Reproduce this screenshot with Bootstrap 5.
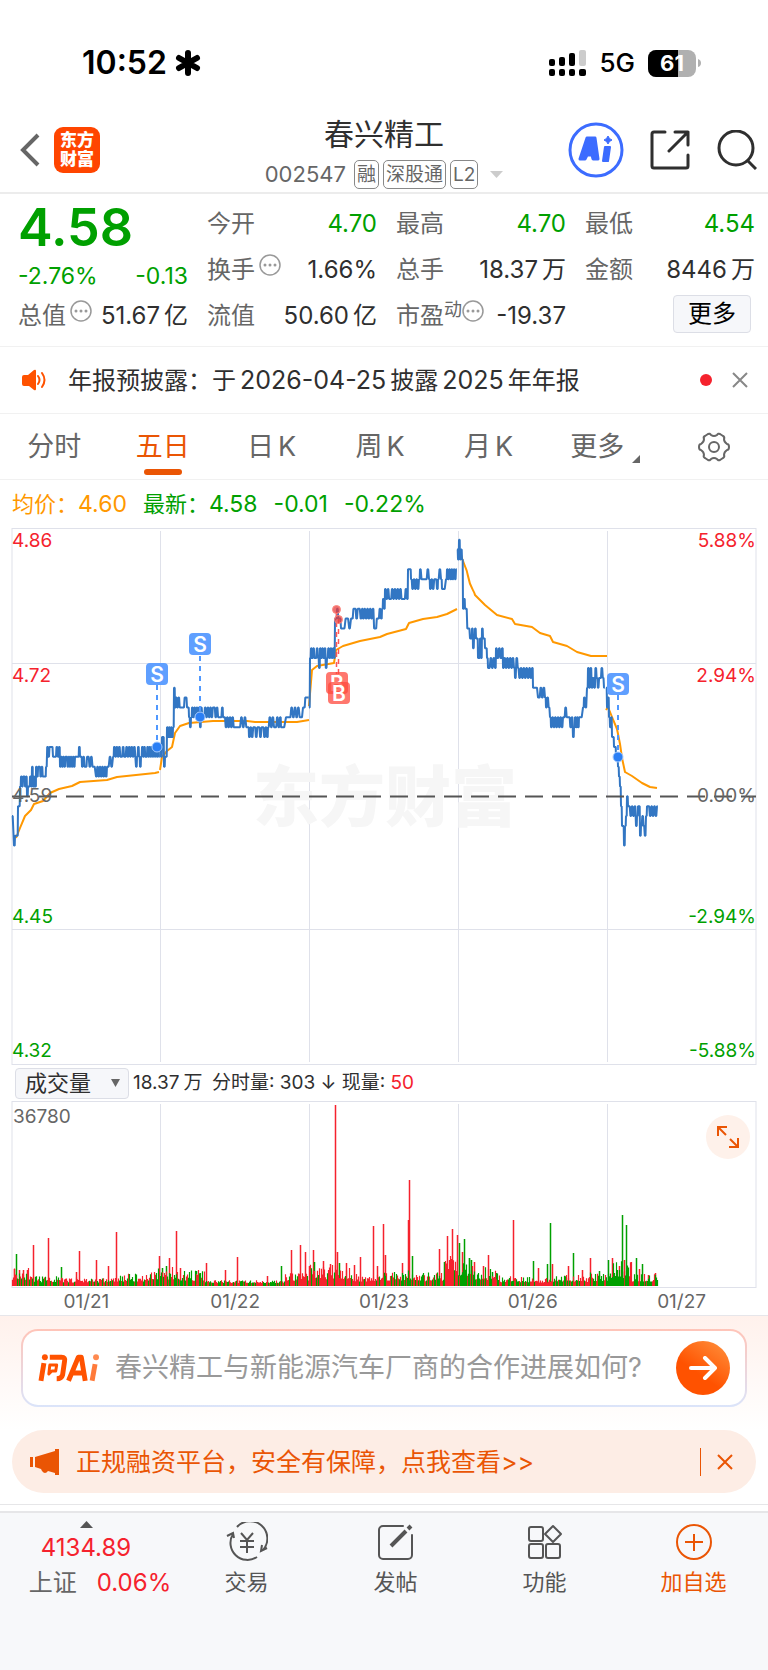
<!DOCTYPE html>
<html lang="zh-CN">
<head>
<meta charset="utf-8">
<meta name="viewport" content="width=device-width, initial-scale=1">
<title>春兴精工 002547</title>
<link href="https://cdn.jsdelivr.net/npm/bootstrap@5.3.0/dist/css/bootstrap.min.css" rel="stylesheet">
<style>
  :root { --up:#f5222d; --down:#00a000; --ink:#2f2f2f; --soft:#666; --accent:#ea5504; --line:#ececec; }
  body { font-family: Inter, "Noto Sans CJK SC", sans-serif; color: var(--ink); background:#fff; font-size:24px; line-height:32px; }
  svg { display:block; }
  button { font-family: inherit; }
  .up { color: var(--up); } .down { color: var(--down); } .soft { color: var(--soft); } .accent { color: var(--accent); }
  .bare { background:none; border:0; padding:0; color:inherit; }
  .status { height:112px; padding:14px 67px 0 82px; color:#000; }
  .status .radio { gap:13px; }
  .clock { font-size:32px; font-weight:600; }
  .carrier { font-size:26px; font-weight:500; }
  .topbar { display:grid; grid-template-columns:1fr auto 1fr; height:82px; padding:0 11px; border-bottom:2px solid var(--line); }
  .topbar .lead-in { gap:14px; padding:0 0 4px 9px; }
  .topbar .tools { gap:26px; padding-bottom:4px; }
  .brand { width:46px; height:46px; border-radius:9px; background:#ff4500; color:#fff; font-size:17px; line-height:19px; font-weight:900; text-align:center; padding-top:4px; }
  .stock { font-size:30px; line-height:38px; }
  .code { margin-top:6px; font-size:22px; line-height:30px; }
  .chip { border:1px solid #888; border-radius:5px; font-size:19px; line-height:27px; padding:0 2px; }
  .quote { display:grid; grid-template-columns:repeat(4,1fr); column-gap:19px; padding:7px 13px 7px 18px; border-bottom:1px solid #f1f1f1; }
  .quote .cell { height:46px; display:flex; align-items:center; justify-content:space-between; white-space:nowrap; }
  .quote .price { height:54px; font-size:52px; font-weight:600; }
  .quote .change { height:38px; padding-top:4px; font-size:23px; }
  .quote sup { font-size:18px; line-height:20px; top:0; }
  .more { width:78px; height:38px; background:#f6f7fa; border:1px solid #dcdee6; border-radius:4px; font-size:24px; line-height:34px; margin:0 4px 4px auto; }
  .notice { height:67px; padding:0 20px; border-bottom:1px solid #f1f1f1; }
  .notice p { font-size:24px; padding-left:20px; }
  .notice .num { font-size:25px; }
  .dot { width:12px; height:12px; border-radius:50%; background:#f5222d; }
  .tabs { height:66px; border-bottom:1px solid #f1f1f1; }
  .tabs .nav-link { position:relative; height:65px; padding:0; color:var(--soft); font-size:27px; line-height:65px; }
  .tabs .active { color:var(--accent); }
  .tabs .active::after { content:""; position:absolute; left:50%; bottom:4px; width:38px; height:6px; margin-left:-19px; border-radius:3px; background:var(--accent); }
  .legend-row { height:48px; padding:0 12px; font-size:22px; }
  .legend-row .num { font-size:23px; }
  .avg { color:#ff9800; }
  .vol-row { height:36px; padding:0 15px; font-size:19px; }
  .vol-pick { width:114px; height:31px; font-size:22px; line-height:29px; background:#f6f7fa; border:1px solid #dcdee6; border-radius:4px; padding:0 6px 0 9px; appearance:none; color:var(--ink); }
  .pick-arrow { right:9px; top:11px; pointer-events:none; }
  .expand { width:44px; height:44px; right:18px; top:14px; border-radius:50%; background:#fef1ea; }
  .dates { padding:0 12px; font-size:19px; line-height:27px; border-bottom:1px solid #e6e6ea; }
  .ask { padding:13px 21px 23px; background:linear-gradient(#fff1ec,#fff); }
  .ask-box { height:78px; border:2px solid transparent; border-radius:17px; padding:0 15px; background:linear-gradient(#fff,#fff) padding-box, linear-gradient(#ffc4b8,#dbe4fa) border-box; }
  .ask-box input { font-size:27px; line-height:36px; border:0; outline:0; background:none; padding:0; color:var(--ink); min-width:0; }
  .ask-box input::placeholder { color:#999; opacity:1; }
  .go { width:54px; height:54px; border-radius:50%; background:linear-gradient(215deg,#ff9440,#ff5200 60%); }
  .promo { height:63px; margin:0 12px 11px; padding:0 23px 0 18px; border-radius:32px; background:#fdede5; color:var(--accent); font-size:25px; }
  .promo .bar { width:1px; height:28px; background:var(--accent); }
  .dock { display:grid; grid-template-columns:172px repeat(4,1fr); height:160px; background:#f7f8fa; border-top:2px solid #e6e6e8; font-size:22px; line-height:30px; color:#555; }
  .dock a { display:flex; flex-direction:column; align-items:center; gap:5px; padding-top:9px; color:inherit; text-decoration:none; }
  .dock .index { padding-top:8px; font-size:24px; color:var(--up); }
  .dock .index .pair { gap:20px; padding-left:28px; }
  .dock .add { color:var(--accent); }
  .gap-under { height:7px; border-top:1px solid #e6e6e8; }
</style>
</head>
<body>

<div class="status d-flex align-items-center">
  <span class="clock">10:52</span>
  <svg class="ms-2" width="26" height="28" viewBox="0 0 26 28" stroke="#000" stroke-width="6" stroke-linecap="round"><path d="M13 4v20M4 9l18 10M22 9L4 19"/></svg>
  <div class="radio d-flex align-items-center ms-auto">
    <svg width="37" height="27" viewBox="0 0 37 27"><g><rect y="9" width="6" height="7" rx="2"/><rect x="10" y="7" width="6" height="9" rx="2"/><rect x="20" y="3" width="6" height="13" rx="2"/><rect x="30" width="7" height="16" rx="2" fill="#ccc"/><rect y="19" width="6" height="7" rx="2"/><rect x="10" y="19" width="6" height="7" rx="2"/><rect x="20" y="19" width="6" height="7" rx="2"/><rect x="30" y="19" width="7" height="7" rx="2"/></g></svg>
    <span class="carrier lh-1">5G</span>
    <svg width="53" height="27" viewBox="0 0 53 27"><rect width="48" height="27" rx="8" fill="#b0b0b0"/><path d="M8 0h22v27H8a8 8 0 0 1-8-8V8a8 8 0 0 1 8-8z"/><path d="M50 9q3 1 3 4t-3 4z" fill="#b0b0b0"/><text x="24" y="21" text-anchor="middle" font-size="22" font-weight="700" fill="#fff">61</text></svg>
  </div>
</div>

<header class="topbar align-items-center">
  <div class="lead-in d-flex align-items-center">
    <button class="bare" aria-label="返回"><svg width="20" height="34" viewBox="0 0 20 34" fill="none" stroke="#666" stroke-width="4"><path d="M18 2L3 17l15 15"/></svg></button>
    <div class="brand">东方<br>财富</div>
  </div>
  <div class="text-center">
    <h1 class="stock fw-normal m-0">春兴精工</h1>
    <div class="code soft d-flex align-items-center gap-1">
      <span class="me-1">002547</span><span class="chip">融</span><span class="chip">深股通</span><span class="chip">L2</span>
      <svg class="ms-2" width="13" height="7" viewBox="0 0 13 7" fill="#ccc"><path d="M0 0h13L6.500 7z"/></svg>
    </div>
  </div>
  <div class="tools d-flex align-items-center justify-content-end">
    <button class="bare" aria-label="AI"><svg width="56" height="56" viewBox="0 0 56 56"><circle cx="28" cy="28" r="26" fill="none" stroke="#3c6cff" stroke-width="3"/><g fill="#3c6cff" stroke="#3c6cff" stroke-linejoin="round"><path fill-rule="evenodd" stroke-width="3" d="M12 37l7-21h8l3 21h-5l-1-4h-5l-2 4zM21 28h3l-1-5z"/><path stroke-width="2" d="M37 25h5l-2 14h-5z"/><path stroke-width="1" d="M40 14q1 3 4 4-3 1-4 4-1-3-4-4 3-1 4-4z"/></g></svg></button>
    <button class="bare" aria-label="分享"><svg width="40" height="40" viewBox="0 0 40 40" fill="none" stroke="#2f2f2f" stroke-width="3" stroke-linecap="round" stroke-linejoin="round"><path d="M15 2H4a2 2 0 0 0-2 2v32a2 2 0 0 0 2 2h32a2 2 0 0 0 2-2V25M25 2h13v13M38 2L19 21"/></svg></button>
    <button class="bare" aria-label="搜索"><svg width="41" height="40" viewBox="0 0 41 40" fill="none" stroke="#2f2f2f" stroke-width="3"><circle cx="20" cy="18" r="17"/><path d="M31 30l9 9"/></svg></button>
  </div>
</header>

<section class="quote">
  <div>
    <div class="cell price down">4.58</div>
    <div class="cell change down"><span>-2.76%</span><span>-0.13</span></div>
    <div class="cell"><span class="soft d-flex">总值<svg class="ms-1" width="22" height="22" viewBox="0 0 22 22"><use href="#info"/></svg></span><span>51.67<span class="ms-1">亿</span></span></div>
  </div>
  <div>
    <div class="cell"><span class="soft">今开</span><span class="down">4.70</span></div>
    <div class="cell"><span class="soft d-flex">换手<svg class="ms-1" width="22" height="22" viewBox="0 0 22 22"><use href="#info"/></svg></span><span>1.66%</span></div>
    <div class="cell"><span class="soft">流值</span><span>50.60<span class="ms-1">亿</span></span></div>
  </div>
  <div>
    <div class="cell"><span class="soft">最高</span><span class="down">4.70</span></div>
    <div class="cell"><span class="soft">总手</span><span>18.37<span class="ms-1">万</span></span></div>
    <div class="cell"><span class="soft d-flex">市盈<sup>动</sup><svg width="22" height="22" viewBox="0 0 22 22"><use href="#info"/></svg></span><span>-19.37</span></div>
  </div>
  <div>
    <div class="cell"><span class="soft">最低</span><span class="down">4.54</span></div>
    <div class="cell"><span class="soft">金额</span><span>8446<span class="ms-1">万</span></span></div>
    <div class="cell"><button class="more p-0">更多</button></div>
  </div>
</section>
<svg width="0" height="0" class="position-absolute"><defs><g id="info"><circle cx="11" cy="11" r="10" fill="none" stroke="#999" stroke-width="1.500"/><g fill="#999"><circle cx="6" cy="11" r="1.500"/><circle cx="11" cy="11" r="1.500"/><circle cx="16" cy="11" r="1.500"/></g></g></defs></svg>

<div class="notice d-flex align-items-center">
  <svg width="28" height="22" viewBox="0 0 28 22"><path d="M2 8q0-2 2-2h4l6-5q2-1 2 1v18q0 2-2 1l-5-4H4q-2 0-2-2z" fill="#ff5200"/><path d="M18 7q3 4 0 8M22 4q5 7 0 14" fill="none" stroke="#ff5200" stroke-width="2" stroke-linecap="round"/></svg>
  <p class="m-0 text-nowrap">年报预披露：于<span class="num mx-1">2026-04-25</span>披露<span class="num mx-1">2025</span>年年报</p>
  <span class="dot ms-auto me-3"></span>
  <button class="bare ms-1" aria-label="关闭"><svg width="16" height="16" viewBox="0 0 16 16" stroke="#888" stroke-width="2"><path d="M1 1l14 14M15 1L1 15"/></svg></button>
</div>

<nav class="tabs nav nav-justified flex-nowrap">
  <a class="nav-link nav-item" href="#">分时</a>
  <a class="nav-link nav-item active" href="#" aria-current="page">五日</a>
  <a class="nav-link nav-item" href="#">日<span class="ms-1">K</span></a>
  <a class="nav-link nav-item" href="#">周<span class="ms-1">K</span></a>
  <a class="nav-link nav-item" href="#">月<span class="ms-1">K</span></a>
  <a class="nav-link nav-item d-flex justify-content-center align-items-center ps-2" href="#">更多<svg class="ms-2 mt-4" width="8" height="8" viewBox="0 0 8 8" fill="#666"><path d="M8 0v8H0z"/></svg></a>
  <a class="nav-link nav-item d-flex justify-content-center align-items-center" href="#" aria-label="设置"><svg width="32" height="30" viewBox="0 0 32 30" fill="none" stroke="#666" stroke-width="2" stroke-linejoin="round"><path d="M10 2q2-1 3 1 3 2 6 0 1-2 3-1l3 2q2 1 1 3 0 3 3 5 2 0 2 3t-2 3q-3 2-3 5 1 2-1 3l-3 2q-2 1-3-1-3-2-6 0-1 2-3 1l-3-2q-2-1-1-3 0-3-3-5-2 0-2-3t2-3q3-2 3-5-1-2 1-3z"/><circle cx="16" cy="15" r="5"/></svg></a>
</nav>

<div class="legend-row d-flex align-items-center gap-3">
  <span class="avg">均价：<span class="num">4.60</span></span><span class="down">最新：<span class="num">4.58</span></span><span class="down num">-0.01</span><span class="down num">-0.22%</span>
</div>

<svg class="w-100" viewBox="0 528 768 537" role="img" aria-label="五日走势">
  <g fill="none" stroke="#dfe1ea" stroke-width="1">
    <rect x="12" y="528.500" width="744" height="536"/>
    <path d="M160.500 531v531M309.500 531v531M458.500 531v531M607.500 531v531M12 663.500h744M12 929.500h744"/>
  </g>
  <text x="385" y="821" text-anchor="middle" font-size="66" font-weight="900" fill="#f6f6f6">东方财富</text>
  <g id="lines" fill="none"></g>
  <path d="M12 796.500h744" stroke="#555" stroke-width="2" stroke-dasharray="18 9"/>
  <g font-size="19">
    <g fill="#f5222d"><text x="12" y="547">4.86</text><text x="12" y="682">4.72</text></g>
    <text x="12" y="802" fill="#666">4.59</text>
    <g fill="#00a000"><text x="12" y="923">4.45</text><text x="12" y="1057">4.32</text></g>
    <g text-anchor="end">
      <g fill="#f5222d"><text x="756" y="547">5.88%</text><text x="756" y="682">2.94%</text></g>
      <text x="756" y="802" fill="#666">0.00%</text>
      <g fill="#00a000"><text x="756" y="923">-2.94%</text><text x="756" y="1057">-5.88%</text></g>
    </g>
  </g>
  <g stroke-dasharray="5 5" fill="none">
    <path stroke="#4f98ff" stroke-width="2" d="M157 685v60M200 656v60M618 695v60"/>
    <path stroke="#f55" stroke-width="1.500" d="M336.500 612v62M338.500 619v60"/>
  </g>
  <g fill="#2b7ff5" stroke="#a9cdff" stroke-width="1"><circle cx="157" cy="747" r="5"/><circle cx="200" cy="717" r="5"/><circle cx="618" cy="757" r="5"/></g>
  <g fill="#e83c3c" fill-opacity=".75" stroke="#ff8a80"><circle cx="336.500" cy="609.500" r="4"/><circle cx="338.500" cy="619.500" r="4"/></g>
  <g fill="#5f9fff"><rect x="146" y="663" width="22" height="22" rx="4"/><rect x="189" y="633" width="22" height="22" rx="4"/><rect x="607" y="673" width="22" height="22" rx="4"/></g>
  <g font-size="21" font-weight="600" text-anchor="middle" fill="#fff"><text x="157" y="682">S</text><text x="200" y="652">S</text><text x="618" y="692">S</text>
    <rect x="326" y="672" width="22" height="22" rx="4" fill="#ff4a3d" fill-opacity=".75"/><text x="337" y="691">B</text>
    <rect x="328" y="682" width="22" height="22" rx="4" fill="#ff4a3d" fill-opacity=".75"/><text x="339" y="701">B</text></g>
</svg>

<div class="vol-row d-flex align-items-center">
  <div class="position-relative me-1">
    <select class="vol-pick d-block" aria-label="指标"><option>成交量</option></select>
    <svg class="pick-arrow position-absolute" width="9" height="8" viewBox="0 0 9 8" fill="#666"><path d="M0 0h9L4.500 8z"/></svg>
  </div>
  <span>18.37<span class="mx-1">万</span> 分时量: 303 ↓ 现量: <span class="up">50</span></span>
</div>

<div class="position-relative">
  <svg class="w-100" viewBox="0 1101 768 187" role="img" aria-label="成交量">
    <g fill="none" stroke="#dfe1ea"><rect x="12" y="1101.500" width="744" height="186"/><path d="M160.500 1104v182M309.500 1104v182M458.500 1104v182M607.500 1104v182"/></g>
    <g id="bars" fill="none"></g>
    <text x="13" y="1123" font-size="19" fill="#666">36780</text>
  </svg>
  <button class="expand bare position-absolute d-flex align-items-center justify-content-center" aria-label="放大"><svg width="22" height="22" viewBox="0 0 22 22" fill="none" stroke="#ea5504" stroke-width="2"><path d="M1 10V1h9M1 1l8 8M21 12v9h-9M21 21l-8-8"/></svg></button>
</div>
<div class="dates d-flex text-center soft">
  <span class="col">01/21</span><span class="col">01/22</span><span class="col">01/23</span><span class="col">01/26</span><span class="col">01/27</span>
</div>

<section class="ask">
  <form class="ask-box d-flex align-items-center">
    <svg width="61" height="28" viewBox="0 0 62 28" fill="none" stroke="#ff5200" stroke-width="5" stroke-linejoin="round">
      <path d="M6 9L3 27M12 3h12q4 0 3 4l-2 14q-1 4-6 4"/><circle cx="7" cy="3" r="3" fill="#ff5200" stroke="none"/><path stroke-width="3" d="M12 11h7l-1 6h-4l-3 3z"/>
      <path d="M31 27L41 3h3l4 24M35 19h11"/><path stroke="#ff7a3a" d="M58 10l-3 17"/><circle cx="59" cy="3" r="3" fill="#ff8a50" stroke="none"/>
    </svg>
    <input class="flex-fill ms-3" type="text" aria-label="问AI" placeholder="春兴精工与新能源汽车厂商的合作进展如何?">
    <button class="go bare d-flex align-items-center justify-content-center" type="button" aria-label="发送"><svg width="28" height="24" viewBox="0 0 28 24" fill="none" stroke="#fff" stroke-width="4" stroke-linecap="round" stroke-linejoin="round"><path d="M2 12h24M16 2l10 10-10 10"/></svg></button>
  </form>
</section>

<div class="promo d-flex align-items-center">
  <svg width="30" height="26" viewBox="0 0 30 26" fill="#ea5504"><path d="M0 8h3v10H0zM5 8l20-6V0h4v26h-4v-2l-7-2q-3 4-6 0l-1-2-6-2z"/></svg>
  <a class="accent text-decoration-none text-nowrap ms-3" href="#">正规融资平台，安全有保障，点我查看&gt;&gt;</a>
  <span class="bar ms-auto me-3"></span>
  <button class="bare" aria-label="关闭广告"><svg width="16" height="16" viewBox="0 0 16 16" stroke="#ea5504" stroke-width="2"><path d="M1 1l14 14M15 1L1 15"/></svg></button>
</div>
<div class="gap-under"></div>

<nav class="dock">
  <a href="#" class="index">
    <svg width="13" height="7" viewBox="0 0 13 7" fill="#555"><path d="M0 7h13L6.500 0z"/></svg>
    <span>4134.89</span>
    <span class="pair d-flex"><span class="soft">上证</span><span>0.06%</span></span>
  </a>
  <a href="#"><svg width="42" height="40" viewBox="0 0 42 38" fill="none" stroke="#555" stroke-width="2"><path d="M11 4a17 17 0 0 1 26 23M31 34A17 17 0 0 1 7 11M1 13l6-3 1 5M41 25l-6 3 1-6"/><path d="M15 10l6 7 6-7M21 17v13M14 18h14M14 24h14"/></svg>交易</a>
  <a href="#"><svg width="38" height="40" viewBox="0 0 38 38" fill="none" stroke="#555" stroke-width="2" stroke-linecap="round"><path d="M26 3H6a4 4 0 0 0-4 4v25a4 4 0 0 0 4 4h25a4 4 0 0 0 4-4V12"/><path stroke-width="4" stroke-linecap="butt" d="M29 8L14 23M31 6l3-3"/></svg>发帖</a>
  <a href="#"><svg width="38" height="40" viewBox="0 0 38 38" fill="none" stroke="#555" stroke-width="2"><rect x="3" y="4" width="14" height="14" rx="2"/><rect x="3" y="21" width="14" height="14" rx="2"/><rect x="20" y="21" width="14" height="14" rx="2"/><path d="M27 3l8 8-8 8-8-8z" stroke-linejoin="round"/></svg>功能</a>
  <a href="#" class="add"><svg width="38" height="40" viewBox="0 0 38 38" fill="none" stroke="#ea5504" stroke-width="2"><circle cx="19" cy="19" r="17"/><path d="M19 11v17M10 19h18"/></svg>加自选</a>
</nav>

<script src="https://cdn.jsdelivr.net/npm/bootstrap@5.3.0/dist/js/bootstrap.bundle.min.js"></script>
<script>
  const mid = 796.3, tick = 9.87;
  // One row per run: start x, end x, price steps (in 0.01) relative to 4.59.
  const days = [
    [[12,12,'-2'],[14,15,'-5 -4'],[17,18,'-4 -1'],[19,20,'-1 1'],[21,26,'2 1 2 2 1 2'],[27,27,'0'],[28,31,'1 1 2 1'],[32,36,'3 1 2 1 1 3'],[37,45,'2 3 3 2 3 2 2 2'],[46,53,'3 5 4 5 5 5 4'],[54,59,'4 4 5 4 5'],[60,75,'3 4 3 4 3 4 4 3 4 3 4 3 4 3 4'],[77,81,'4 4 5 4 4'],[82,87,'3 4 3 3 4'],[88,94,'4 3 4 3 3'],[96,107,'2 3 2 3 2 3 2 3 2 3'],[108,113,'3 4 3 4'],[114,124,'5 4 5 4 5 4 4 5 4'],[125,134,'4 5 4 5 4 5 4 5'],[136,141,'3 4 5 4 3 4'],[142,159,'5 4 5 4 4 5 4 5 4 5 4 5 4 5 4 5 4']],
    [[160,163,'5 4 6 6'],[164,166,'3 4 4'],[167,173,'7 6 7 6 7 6 7'],[174,175,'11 9'],[176,187,'10 9 10 9 9 9 9 10 10 9'],[188,191,'9 8 7 8'],[192,200,'9 8 9 8 9 8 9 7'],[201,222,'9 8 8 9 8 9 8 9 8 9 9 8 9 8 8 8 9'],[223,235,'8 8 7 8 7 8 7 8 7 7'],[236,248,'7 7 7 8 7 8 7 7'],[249,267,'6 7 6 7 7 6 7 7 6 7 7 6 7 6'],[268,280,'7 8 7 8 7 7 8 7 8'],[281,286,'7 7 8'],[288,303,'8 8 9 8 9 8 9 8 8 9'],[304,308,'9 10 10 10']],
    [[309,309,'9'],[310,311,'14 15'],[312,318,'14 15 14 14 15 14'],[319,320,'13 15'],[321,333,'14 15 14 15 13 14 15 14 15 14 15'],[334,336,'14 18 18'],[337,341,'19 18 18 17'],[342,351,'17 17 18 18 17 18'],[352,362,'18 19 19 18 19 19 18 19'],[363,381,'18 19 18 19 18 19 18 19 17 17 18 18 19 18'],[382,384,'19 20 19'],[385,407,'21 20 21 20 20 21 20 21 20 21 20 21 20 20 20 21 20'],[408,410,'23 23'],[411,419,'22 21 22 21 22 21 22'],[420,429,'23 22 22 22 22 23 22'],[430,437,'21 22 21 22 22 21'],[438,441,'22 23 22'],[442,446,'21 21 22'],[447,456,'23 22 23 22 23 22 23 22 23']],
    [[457,462,'25 24 26 24 25 24'],[463,465,'19 20 19'],[466,470,'19 17 17 16'],[471,477,'16 17 15 16 17 16 16'],[478,481,'14 14 16 14'],[482,484,'17 16 16'],[485,488,'15 15 14 13'],[489,495,'13 14 13 14 13'],[496,502,'15 14 15 14 15'],[503,514,'13 14 13 14 13 14 13 14 13'],[515,532,'12 14 13 12 13 12 13 12 13 12 13 12 13'],[533,538,'11 11 11 10'],[539,545,'10 11 10 11 10'],[546,550,'9 10 9 8'],[551,563,'7 8 7 8 7 8 7 8 7 8'],[564,568,'8 9 8 8'],[569,573,'8 7 8 6'],[574,578,'7 8 7 8 7'],[579,583,'8 8 9'],[584,587,'10 9 11'],[588,604,'13 11 13 11 12 11 13 12 11 12 12 13 12 11']],
    [[606,609,'11 9 10 8'],[610,613,'7 8 6 6'],[614,617,'5 5 4 4'],[618,621,'3 2 1 -1'],[622,624,'-3 -3 -5'],[625,628,'-3 -2 0 -1'],[629,636,'-1 -2 -1 -2 -1 -3'],[637,640,'-2 -1 -1 -4'],[641,646,'-3 -2 -3 -4 -2'],[647,657,'-1 -1 -2 -1 -2 -1 -2 -1']]
  ];
  const averages = [
    'M16 838l4-10 5-12 6-6 3-6 9-3 7-8 9-4 13-3 8-4 27-2 10-3 38-4 4-1',
    'M160 770l2-13 5-6 5-4 3-14 5-7 9-3 24-2h34l8 1h42l12-2',
    'M309 706l3-36 5-4 17-3 2-13 7-4 17-5 20-4 7-3 19-5 3-6 14-4 14-2 10-3 10-5',
    'M460 550c2 14 6 14 8 26s6 14 7 19l10 10 12 10 15 4 3 5 17 3 8 6 10 3 3 6 14 4 10 6 14 4h16',
    'M606 710l2-3 4 10 5 12 3 15 2 14 3 14 7 4 10 7 8 4 7 1'
  ];
  let lines = averages.map(d => `<path d="${d}" stroke="#ff9800" stroke-width="2" stroke-linejoin="round"/>`).join('');
  for (const day of days) {
    const pts = [];
    for (const [a, b, s] of day) {
      const v = s.split(' ');
      v.forEach((n, i) => {
        const x = a + (v.length > 1 ? (b - a) * i / (v.length - 1) : 0), y = (mid - n * tick).toFixed(1);
        // each price holds for a moment before the next trade
        pts.push(`${x.toFixed(1)},${y} ${(x + .7).toFixed(1)},${y}`);
      });
    }
    lines += `<polyline points="${pts.join(' ')}" stroke="#3276c3" stroke-width="2" stroke-linejoin="bevel"/>`;
  }
  document.getElementById('lines').innerHTML = lines;

  // Volume: quiet base level by range, then the notable minutes as x:height.
  const base = [[12,30,14,.6],[30,60,6,.5],[60,120,5,.7],[120,150,8,.6],[150,175,14,.6],[175,205,11,.3],[205,285,3,.5],[285,310,9,.8],[310,350,15,.8],[350,384,8,.8],[384,410,11,.5],[410,445,9,.6],[445,458,26,.9],[458,475,26,.2],[475,500,13,.5],[500,530,6,.3],[530,550,5,.8],[550,590,7,.6],[590,612,9,.3],[612,632,20,.35],[632,658,8,.4]];
  const red = '14:17 19:16 23:16 27:16 33:41 48:48 76:14 79:35 96:26 108:20 116:54 159:30 169:28 176:55 180:18 206:23 225:16 237:29 267:10 291:36 300:41 305:34 309:20 313:36 323:25 330:22 335:181 337:34 346:23 354:21 360:29 373:60 377:20 383:62 385:31 402:23 408:66 409:106 439:37 447:50 452:57 457:51 462:34 474:24 483:20 488:31 513:66 538:18 552:22 568:20 582:16 590:28 612:28 619:20 624:26 639:17 648:11 655:13';
  const green = '16:32 61:19 162:18 166:20 196:15 281:20 314:24 339:23 412:30 444:24 459:43 464:47 469:28 471:26 492:14 496:13 533:25 547:22 550:63 573:33 599:15 608:26 622:71 626:61 636:28 642:22';
  let seed = 11;
  const rnd = () => (seed = (seed * 16807) % 2147483647) / 2147483647;
  let r = '', g = '';
  const bar = (x, h) => `M${x + .5} 1286v${-h}`;
  for (const [a, b, h, p] of base)
    for (let x = a; x < b; x++) {
      const k = 2 + h * Math.pow(rnd(), 1.5) + h * .3;
      if (rnd() < p) r += bar(x, k.toFixed(1)); else g += bar(x, k.toFixed(1));
    }
  const spikes = s => s.split(' ').map(t => bar(...t.split(':').map(Number))).join('');
  document.getElementById('bars').innerHTML =
    `<path d="${spikes(red)}" stroke="#f5222d" stroke-width="1.5"/><path d="${spikes(green)}" stroke="#00a000" stroke-width="1.5"/>` +
    `<path d="${r}" stroke="#f5222d" stroke-width="1.2"/><path d="${g}" stroke="#00a000" stroke-width="1.2"/>`;
</script>
</body>
</html>
